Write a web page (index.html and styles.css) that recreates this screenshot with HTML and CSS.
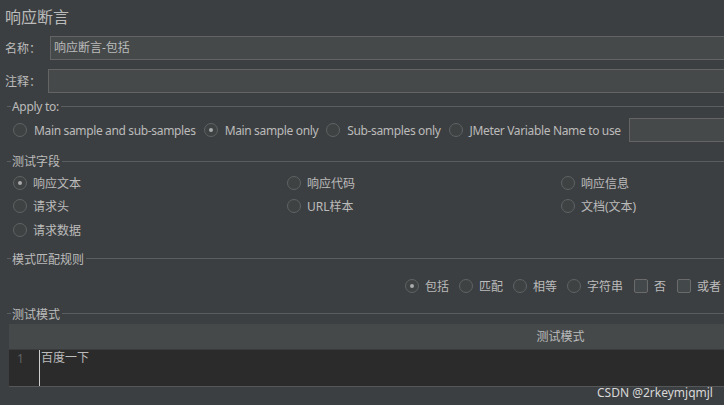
FILE: index.html
```html
<!DOCTYPE html>
<html lang="zh-CN">
<head>
  <meta charset="UTF-8">
  <title>响应断言</title>
  <link rel="stylesheet" href="styles.css">
</head>
<body>
  <div class="panel">
    <h1 class="title">响应断言</h1>

    <div class="field-row">
      <label class="field-label">名称：</label>
      <div class="text-input">响应断言-包括</div>
    </div>
    <div class="field-row comments">
      <label class="field-label short">注释：</label>
      <div class="text-input"></div>
    </div>

    <div class="group-title apply-title"><span>Apply to:</span></div>
    <div class="apply-row">
      <span class="option"><span class="radio"></span>Main sample and sub-samples</span>
      <span class="option"><span class="radio checked"></span>Main sample only</span>
      <span class="option"><span class="radio"></span>Sub-samples only</span>
      <span class="option"><span class="radio"></span>JMeter Variable Name to use</span>
      <div class="text-input var-input"></div>
    </div>

    <div class="group-title fields-title"><span>测试字段</span></div>
    <div class="field-grid">
      <span class="option"><span class="radio checked"></span>响应文本</span>
      <span class="option"><span class="radio"></span>响应代码</span>
      <span class="option"><span class="radio"></span>响应信息</span>
      <span class="option"><span class="radio"></span>请求头</span>
      <span class="option"><span class="radio"></span>URL样本</span>
      <span class="option"><span class="radio"></span>文档(文本)</span>
      <span class="option"><span class="radio"></span>请求数据</span>
    </div>

    <div class="group-title rules-title"><span>模式匹配规则</span></div>
    <div class="rules-row">
      <span class="option"><span class="radio checked"></span>包括</span>
      <span class="option"><span class="radio"></span>匹配</span>
      <span class="option"><span class="radio"></span>相等</span>
      <span class="option"><span class="radio"></span>字符串</span>
      <span class="option"><span class="checkbox"></span>否</span>
      <span class="option"><span class="checkbox"></span>或者</span>
    </div>

    <div class="group-title patterns-title"><span>测试模式</span></div>
    <div class="pattern-table">
      <div class="table-header">测试模式</div>
      <div class="editor">
        <div class="gutter">1</div>
        <div class="code"><span class="caret"></span>百度一下</div>
      </div>
    </div>
  </div>
  <div class="watermark">CSDN @2rkeymjqmjl</div>
</body>
</html>
```

FILE: styles.css
```css
html, body {
  margin: 0;
  height: 100%;
}
body {
  background-color: #3c3f41;
  color: #bbbbbb;
  font-family: "Noto Sans", "Noto Sans CJK SC", sans-serif;
  font-size: 12px;
  overflow: hidden;
  position: relative;
}
.panel {
  width: 1112px;
}
.title {
  margin: 0;
  height: 36px;
  line-height: 34px;
  padding-left: 5px;
  font-size: 16px;
  font-weight: normal;
}
.field-row {
  display: flex;
  align-items: center;
  height: 24px;
}
.field-row.comments {
  margin-top: 9px;
}
.field-label {
  width: 50px;
  padding-left: 5px;
  box-sizing: border-box;
}
.field-label.short {
  width: 48px;
}
.text-input {
  flex: 1;
  height: 24px;
  box-sizing: border-box;
  background-color: #45494a;
  border: 1px solid #646464;
  padding: 0 3px;
  line-height: 22px;
}
.group-title {
  display: flex;
  align-items: center;
  height: 14px;
  padding-left: 7px;
}
.group-title::before {
  content: "";
  width: 4px;
  height: 1px;
  background-color: #5b5e60;
  margin-right: 1px;
}
.group-title::after {
  content: "";
  flex: 1;
  height: 1px;
  background-color: #5b5e60;
  margin-left: 2px;
}
.apply-title { margin-top: 6px; letter-spacing: -0.3px; }
.fields-title { margin-top: 12px; }
.rules-title { margin-top: 10px; }
.patterns-title { margin-top: 9px; }

.option {
  display: inline-flex;
  align-items: center;
  white-space: nowrap;
}
.radio, .checkbox {
  width: 14px;
  height: 14px;
  box-sizing: border-box;
  border: 1px solid #5f6364;
  background-color: #3e4243;
  margin-right: 6px;
  flex: none;
  position: relative;
}
.radio {
  border-radius: 50%;
}
.radio.checked::after {
  content: "";
  position: absolute;
  left: 4px;
  top: 4px;
  width: 4px;
  height: 4px;
  border-radius: 50%;
  background-color: #a9abad;
}
.checkbox {
  border-radius: 2px;
  background-color: #43494a;
  border-color: #6b6b6b;
}

.apply-row {
  display: flex;
  align-items: center;
  gap: 8px;
  height: 24px;
  margin-top: 5px;
  padding-left: 13px;
  letter-spacing: -0.35px;
}
.apply-row .radio {
  margin-right: 7px;
}
.var-input {
  flex: none;
  width: 300px;
}

.field-grid {
  display: grid;
  grid-template-columns: repeat(3, 274px);
  grid-auto-rows: 23.5px;
  margin-top: 3px;
  padding-left: 13px;
}

.rules-row {
  display: flex;
  align-items: center;
  gap: 10px;
  height: 24px;
  margin-top: 8px;
  padding-left: 405px;
}
.rules-row .checkbox {
  margin-left: 1px;
}

.pattern-table {
  margin: 3px 0 0 9px;
  border-bottom: 1px solid #555759;
}
.table-header {
  height: 25px;
  line-height: 25px;
  background-color: #45494a;
  text-align: center;
  border-bottom: 1px solid #393b3d;
}
.editor {
  display: flex;
  height: 36px;
  background-color: #2b2b2b;
}
.gutter {
  width: 30px;
  box-sizing: border-box;
  padding-left: 8px;
  color: #606366;
  line-height: 16px;
  padding-top: 1px;
}
.code {
  position: relative;
  padding-left: 2px;
  line-height: 16px;
}
.caret {
  position: absolute;
  left: 0;
  top: 0;
  width: 1px;
  height: 36px;
  background-color: #cfcfcf;
}
.watermark {
  position: absolute;
  left: 597px;
  top: 384px;
  color: #d8d8d8;
  font-size: 12px;
}
```
